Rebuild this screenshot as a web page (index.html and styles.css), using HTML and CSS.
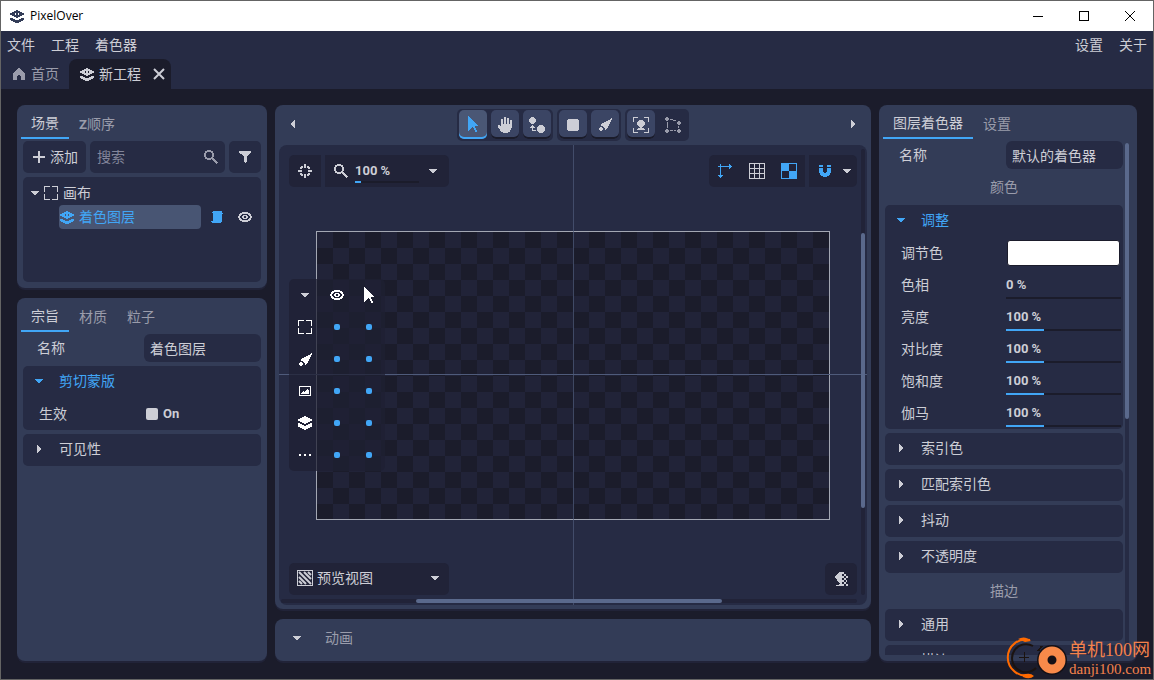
FILE: index.html
```html
<!DOCTYPE html>
<html lang="zh-CN">
<head>
<meta charset="utf-8">
<title>PixelOver</title>
<link rel="stylesheet" href="styles.css">
</head>
<body>
<svg class="defs" aria-hidden="true">
  <symbol id="layer" viewBox="0 0 14 13"><path fill-rule="evenodd" d="M6 0h2v1h2v1h2v1h2v2h-2v1h-2v1H8v1H6V7H4V6H2V5H0V3h2V2h2V1h2zM5 3v2h1V3zM8 3v2h1V3zM0 8h3v1h2v1h4V9h2V8h3v2h-1v1h-2v1H9v1H5v-1H3v-1H1v-1H0z"/></symbol>
  <symbol id="stack" viewBox="0 0 14 14"><path d="M6 0h2v1h2v1h2v1h2v2h-2v1h-2v1H8v1H6V7H4V6H2V5H0V3h2V2h2V1h2zM0 7h2v1h2v1h2v1h2V9h2V8h2V7h2v4h-2v1h-2v1H8v1H6v-1H4v-1H2v-1H0z"/></symbol>
  <symbol id="home" viewBox="0 0 12 12"><path d="M5 0h2v1h1v1h1v1h1v1h1v1h1v7H8V8H7V7H5v1H4v4H0V5h1V4h1V3h1V2h1V1h1z"/></symbol>
  <symbol id="close" viewBox="0 0 12 12"><path class="soft" d="M1 1l10 10M11 1L1 11" fill="none" stroke="currentColor" stroke-width="2"/></symbol>
  <symbol id="plus" viewBox="0 0 12 12"><path d="M5 0h2v5h5v2H7v5H5V7H0V5h5z"/></symbol>
  <symbol id="search" viewBox="0 0 14 14"><path d="M3 0h4v1h2v2h1v4H9v1h1v1h1v1h1v1h1v1h1v1h-1v1h-1v-1h-1v-1h-1v-1H9v-1H8V9H7v1H3V9H1V7H0V3h1V1h2zM3 2v1H2v4h1v1h4V7h1V3H7V2z" fill-rule="evenodd"/></symbol>
  <symbol id="filter" viewBox="0 0 12 12"><path d="M0 0h12v2h-1v1h-1v1H9v1H8v6H7v1H6v-1H5V5H4V4H3V3H1V2H0z"/></symbol>
  <symbol id="down" viewBox="0 0 8 4"><path d="M0 0h8v1H7v1H6v1H5v1H3V3H2V2H1V1H0z"/></symbol>
  <symbol id="right" viewBox="0 0 4 8"><path d="M0 0h1v1h1v1h1v1h1v2H3v1H2v1H1v1H0z"/></symbol>
  <symbol id="left" viewBox="0 0 4 8"><path d="M4 0H3v1H2v1H1v1H0v2h1v1h1v1h1v1h1z"/></symbol>
  <symbol id="frame" viewBox="0 0 14 14"><path d="M0 0h6v1H1v5H0zM8 0h6v6h-1V1H8zM0 8h1v5h5v1H0zM13 8h1v6H8v-1h5z"/></symbol>
  <symbol id="script" viewBox="0 0 12 12"><path d="M2 0h9v2h1v1h-1v8h-1v1H1v-1H0v-1h2V2H1V1h1z"/></symbol>
  <symbol id="eye" viewBox="0 0 14 10"><path fill-rule="evenodd" d="M4 0h6v1h2v1h1v2h1v2h-1v2h-1v1h-2v1H4V9H2V8H1V6H0V4h1V2h1V1h2zM4 2v1H3v1H2v2h1v1h1v1h6V7h1V6h1V4h-1V3h-1V2zM5 3h4v1h1v2H9v1H5V6H4V4h1zM6 4v2h2V4z"/></symbol>
  <symbol id="pointer" viewBox="0 0 11 17"><path d="M0 0h1v1h1v1h1v1h1v1h1v1h1v1h1v1h1v1h1v1h1v1H7v2h1v2h1v2H7v-2H6v-2H5v-1H4v1H3v1H2v1H1v1H0z"/></symbol>
  <symbol id="hand" viewBox="0 0 14 16"><path d="M6 0h2v7h1V1h2v6h1V3h2v8h-1v2h-1v2h-2v1H5v-1H3v-1H2v-2H1v-1H0V8h2v1h1V2h2v5h1z"/></symbol>
  <symbol id="bones" viewBox="0 0 16 16"><path d="M2 0h3v1h1v1h1v3H6v1H5v1H2V6H1V5H0V2h1V1h1zM10 8h4v1h1v1h1v4h-1v1h-1v1h-4v-1H9v-1H8v-4h1V9h1zM3 8h1v1h1v1h1v1H4v2h3v1H3v-3H1v-1h1V9h1z"/></symbol>
  <symbol id="square" viewBox="0 0 12 12"><path d="M1 0h10v1h1v10h-1v1H1v-1H0V1h1z"/></symbol>
  <symbol id="brush" viewBox="0 0 13 13"><path d="M12 0h1v2h-1v2h-1v2h-1v2H9v2H8v1H7v1H6v-2H5V9H4V8H2V6h1V5h2V4h2V3h2V2h2V1h1zM1 9h2v1h1v2H3v1H1v-1H0v-2h1z"/></symbol>
  <symbol id="focus" viewBox="0 0 16 16"><path d="M0 0h5v1H1v4H0zM11 0h5v5h-1V1h-4zM0 11h1v4h4v1H0zM15 11h1v5h-5v-1h4zM6 3h4v1h1v1h1v3h-1v1h-1v1H9v1h2v1h1v1H4v-1h1v-1h2v-1H6V9H5V8H4V5h1V4h1z"/></symbol>
  <symbol id="mesh" viewBox="0 0 16 16"><path d="M1 0h2v1h1v2H3v1H1V3H0V1h1zM13 4h2v1h1v2h-1v1h-2V7h-1V5h1zM1 12h2v1h1v2H3v1H1v-1H0v-2h1zM13 12h2v1h1v2h-1v1h-2v-1h-1v-2h1zM2 5h1v6H2zM5 2h3v1H5zM8 3h3v1H8zM13 9h1v2h-1zM5 13h3v1H5zM9 13h2v1H9z"/></symbol>
  <symbol id="target" viewBox="0 0 14 14"><path d="M6 0h2v4H6zM6 10h2v4H6zM0 6h4v2H0zM10 6h4v2h-4zM3 2h2v2H4v1H2V3h1zM9 2h2v1h1v2h-2V4H9zM2 9h2v1h1v2H3v-1H2zM10 9h2v2h-1v1H9v-2h1z"/></symbol>
  <symbol id="axis" viewBox="0 0 14 14"><path d="M2 0h1v2h8V0h1v1h1v1h1v1h-1v1h-1v1h-1V3H3v8h2v1H4v1H3v1H2v-1H1v-1H0v-1h2V3H0V2h2z"/></symbol>
  <symbol id="grid" viewBox="0 0 16 16"><path fill-rule="evenodd" d="M0 0h16v16H0zM1 1v4h4V1zM6 1v4h4V1zM11 1v4h4V1zM1 6v4h4V6zM6 6v4h4V6zM11 6v4h4V6zM1 11v4h4v-4zM6 11v4h4v-4zM11 11v4h4v-4z"/></symbol>
  <symbol id="checker" viewBox="0 0 16 16"><path fill-rule="evenodd" d="M0 0h16v16H0zM8 1v7H1v7h7V8h7V1z"/></symbol>
  <symbol id="magnet" viewBox="0 0 12 12"><path d="M0 0h4v2H0zM8 0h4v2H8zM0 3h4v4h1v1h2V7h1V3h4v5h-1v2h-1v1H8v1H4v-1H2v-1H1V8H0z"/></symbol>
  <symbol id="image" viewBox="0 0 12 10"><path fill-rule="evenodd" d="M0 0h12v10H0zM1 1v8h10V1zM2 8V7h1V6h1V5h1v1h1V5h1V4h1V3h1v1h1v4z"/></symbol>
  <symbol id="dots" viewBox="0 0 12 2"><path d="M0 0h2v2H0zM5 0h2v2H5zM10 0h2v2h-2z"/></symbol>
  <symbol id="hatch" viewBox="0 0 16 16"><path fill="none" stroke="currentColor" d="M.5.5h15v15H.5z"/><path class="soft" fill="none" stroke="currentColor" stroke-width="2" d="M2 2l12 12M7 2l7 7M11 2l3 3M2 7l7 7M2 11l3 3"/></symbol>
  <symbol id="dither" viewBox="0 0 13 14"><path d="M4 0h5v2H7v2h2v2H7v2h2v2H7v2h2v2H1v-1h3v-1h1v-1H4v-1H3V9H2V7H1V6H0V4h1V3h1V2h1V1h1zM9 2h2v2H9zM11 4h2v2h-2zM9 6h2v2H9zM11 8h1v2h-1zM9 10h2v2H9zM11 12h2v2h-2z"/></symbol>
</svg>

<div class="window">
  <header class="titlebar">
    <svg class="logo" width="14" height="13"><use href="#layer"/></svg>
    <h1 class="title">PixelOver</h1>
    <button class="win-btn" aria-label="最小化"><svg width="10" height="10"><path d="M0 5h10v1H0z"/></svg></button>
    <button class="win-btn" aria-label="最大化"><svg width="10" height="10"><path fill="none" stroke="currentColor" d="M.5.5h9v9h-9z"/></svg></button>
    <button class="win-btn" aria-label="关闭"><svg width="10" height="10"><path class="soft" fill="none" stroke="currentColor" d="M0 0l10 10M10 0L0 10"/></svg></button>
  </header>

  <nav class="menubar">
    <button>文件</button><button>工程</button><button>着色器</button>
    <span class="spacer"></span>
    <button>设置</button><button>关于</button>
  </nav>

  <div class="doc-tabs">
    <button class="doc-tab"><svg width="12" height="12"><use href="#home"/></svg>首页</button>
    <div class="doc-tab current"><svg width="14" height="13"><use href="#layer"/></svg><span>新工程</span>
      <button class="tab-close" aria-label="关闭标签"><svg width="12" height="12"><use href="#close"/></svg></button></div>
  </div>

  <main class="workspace">
    <aside class="column">
      <section class="panel">
        <div class="tabs"><button class="tab active">场景</button><button class="tab"><span class="latin">Z</span>顺序</button></div>
        <div class="panel-body">
          <div class="tools">
            <button class="add"><svg width="12" height="12"><use href="#plus"/></svg>添加</button>
            <label class="search"><input type="text" placeholder="搜索" aria-label="搜索"><svg width="14" height="14"><use href="#search"/></svg></label>
            <button class="filter" aria-label="筛选"><svg width="12" height="12"><use href="#filter"/></svg></button>
          </div>
          <div class="tree">
            <div class="tree-row"><svg width="8" height="4"><use href="#down"/></svg><svg width="14" height="14"><use href="#frame"/></svg><span>画布</span></div>
            <div class="tree-row child">
              <button class="tree-item"><svg width="14" height="13"><use href="#layer"/></svg>着色图层</button>
              <button class="tree-act wide accent" aria-label="着色器"><svg width="12" height="12"><use href="#script"/></svg></button>
              <button class="tree-act" aria-label="显示"><svg width="14" height="10"><use href="#eye"/></svg></button>
            </div>
          </div>
        </div>
      </section>

      <section class="panel grow">
        <div class="tabs"><button class="tab active">宗旨</button><button class="tab">材质</button><button class="tab">粒子</button></div>
        <div class="panel-body">
          <div class="name-row"><label for="lname">名称</label><input id="lname" type="text" value="着色图层"></div>
          <div class="group">
            <button class="group-head open"><svg width="8" height="4"><use href="#down"/></svg>剪切蒙版</button>
            <div class="prop"><label for="clip">生效</label><label class="check"><input id="clip" type="checkbox"><span class="latin">On</span></label></div>
          </div>
          <div class="group"><button class="group-head"><svg width="8" height="8"><use href="#right"/></svg>可见性</button></div>
        </div>
      </section>
    </aside>

    <div class="column center">
      <section class="panel grow stage">
        <div class="toolbar">
          <button class="edge" aria-label="收起左侧"><svg width="4" height="8"><use href="#left"/></svg></button>
          <div class="tool-groups">
            <div class="tool-group">
              <button class="tool selected" aria-label="选择"><svg width="11" height="17"><use href="#pointer"/></svg></button>
              <button class="tool" aria-label="平移"><svg width="14" height="16"><use href="#hand"/></svg></button>
              <button class="tool" aria-label="骨骼"><svg width="16" height="16"><use href="#bones"/></svg></button>
            </div>
            <div class="tool-group">
              <button class="tool" aria-label="形状"><svg width="12" height="12"><use href="#square"/></svg></button>
              <button class="tool" aria-label="画笔"><svg width="13" height="13"><use href="#brush"/></svg></button>
            </div>
            <div class="tool-group">
              <button class="tool" aria-label="聚焦"><svg width="16" height="16"><use href="#focus"/></svg></button>
              <button class="tool flat" aria-label="网格变形"><svg width="16" height="16"><use href="#mesh"/></svg></button>
            </div>
          </div>
          <button class="edge" aria-label="收起右侧"><svg width="4" height="8"><use href="#right"/></svg></button>
        </div>

        <div class="viewport">
          <div class="canvas"></div>
          <div class="axis-x"></div><div class="axis-y"></div>

          <div class="overlay top-left">
            <div class="hud first"><button aria-label="居中"><svg width="14" height="14"><use href="#target"/></svg></button></div>
            <div class="hud last zoom">
              <svg width="14" height="14"><use href="#search"/></svg>
              <div class="spin"><input type="text" class="latin" value="100 %" aria-label="缩放"><input type="range" value="9" style="--fill:9%" aria-label="缩放滑块"></div>
              <button aria-label="缩放选项"><svg width="8" height="4"><use href="#down"/></svg></button>
            </div>
          </div>
          <div class="overlay top-right">
            <div class="hud first">
              <button class="accent" aria-label="坐标轴"><svg width="14" height="14"><use href="#axis"/></svg></button>
              <button aria-label="网格"><svg width="16" height="16"><use href="#grid"/></svg></button>
              <button class="accent" aria-label="棋盘"><svg width="16" height="16"><use href="#checker"/></svg></button>
            </div>
            <div class="hud last snap">
              <button class="accent" aria-label="吸附"><svg width="12" height="12"><use href="#magnet"/></svg></button>
              <button class="narrow" aria-label="吸附选项"><svg width="8" height="4"><use href="#down"/></svg></button>
            </div>
          </div>

          <div class="overlay filters">
            <button aria-label="折叠"><svg class="dim" width="8" height="4"><use href="#down"/></svg></button><button aria-label="可见"><svg width="14" height="10"><use href="#eye"/></svg></button><button aria-label="可选"><svg width="11" height="17"><use href="#pointer"/></svg></button>
            <span><svg width="14" height="14"><use href="#frame"/></svg></span><button class="dot" aria-label="画布可见"></button><button class="dot" aria-label="画布可选"></button>
            <span><svg width="13" height="13"><use href="#brush"/></svg></span><button class="dot" aria-label="画笔可见"></button><button class="dot" aria-label="画笔可选"></button>
            <span><svg width="12" height="10"><use href="#image"/></svg></span><button class="dot" aria-label="图像可见"></button><button class="dot" aria-label="图像可选"></button>
            <span><svg width="14" height="14"><use href="#stack"/></svg></span><button class="dot" aria-label="图层可见"></button><button class="dot" aria-label="图层可选"></button>
            <span><svg width="12" height="2"><use href="#dots"/></svg></span><button class="dot" aria-label="其他可见"></button><button class="dot" aria-label="其他可选"></button>
          </div>

          <label class="overlay preview">
            <svg width="16" height="16"><use href="#hatch"/></svg>
            <select aria-label="预览"><option>预览视图</option></select>
            <svg width="8" height="4"><use href="#down"/></svg>
          </label>
          <div class="overlay bottom-right"><button aria-label="抖动预览"><svg width="13" height="14"><use href="#dither"/></svg></button></div>
          <div class="overlay vbar"><div class="vthumb"></div></div>
          <div class="overlay hbar"><div class="hthumb"></div></div>
        </div>
      </section>

      <section class="panel"><button class="anim"><svg width="8" height="4"><use href="#down"/></svg>动画</button></section>
    </div>

    <aside class="column right">
      <section class="panel grow">
        <div class="tabs"><button class="tab active">图层着色器</button><button class="tab">设置</button></div>
        <div class="scroll">
          <div class="scroll-body">
            <div class="name-row"><label for="sname">名称</label><input id="sname" type="text" value="默认的着色器"></div>
            <h2 class="caption">颜色</h2>
            <div class="group">
              <button class="group-head open"><svg width="8" height="4"><use href="#down"/></svg>调整</button>
              <div class="prop"><label for="tint">调节色</label><button id="tint" class="swatch"></button></div>
              <div class="prop"><label for="p1">色相</label><div class="spin"><input id="p1" type="text" class="latin" value="0 %"><input type="range" value="0" style="--fill:0%" aria-label="色相滑块"></div></div>
              <div class="prop"><label for="p2">亮度</label><div class="spin"><input id="p2" type="text" class="latin" value="100 %"><input type="range" value="33" style="--fill:33%" aria-label="亮度滑块"></div></div>
              <div class="prop"><label for="p3">对比度</label><div class="spin"><input id="p3" type="text" class="latin" value="100 %"><input type="range" value="33" style="--fill:33%" aria-label="对比度滑块"></div></div>
              <div class="prop"><label for="p4">饱和度</label><div class="spin"><input id="p4" type="text" class="latin" value="100 %"><input type="range" value="33" style="--fill:33%" aria-label="饱和度滑块"></div></div>
              <div class="prop"><label for="p5">伽马</label><div class="spin"><input id="p5" type="text" class="latin" value="100 %"><input type="range" value="33" style="--fill:33%" aria-label="伽马滑块"></div></div>
            </div>
            <div class="group"><button class="group-head"><svg width="8" height="8"><use href="#right"/></svg>索引色</button></div>
            <div class="group"><button class="group-head"><svg width="8" height="8"><use href="#right"/></svg>匹配索引色</button></div>
            <div class="group"><button class="group-head"><svg width="8" height="8"><use href="#right"/></svg>抖动</button></div>
            <div class="group"><button class="group-head"><svg width="8" height="8"><use href="#right"/></svg>不透明度</button></div>
            <h2 class="caption">描边</h2>
            <div class="group"><button class="group-head"><svg width="8" height="8"><use href="#right"/></svg>通用</button></div>
            <div class="group"><button class="group-head"><svg width="8" height="8"><use href="#right"/></svg>描边</button></div>
          </div>
          <div class="scrollbar"><div class="thumb"></div></div>
        </div>
      </section>
    </aside>
  </main>

  <div class="watermark">
    <svg width="64" height="42" viewBox="0 0 64 42">
      <path d="M25 3A18 18 0 1 0 25 38" fill="none" stroke="#ff6a00" stroke-width="2" class="soft"/>
      <path d="M13 2q7-4 13 2l-6 1zM17 38q8-3 12 1-4 4-11 1z" fill="#ff6a00" class="soft"/>
      <path d="M28 9A14 14 0 1 0 31 31" fill="none" stroke="#1b1310" stroke-width="2" class="soft"/>
      <path d="M19 15v10M14 20h10" stroke="#1b1310" stroke-width="1"/>
      <path d="M33 14l4-5" stroke="#1b1310" stroke-width="2"/>
      <circle cx="47" cy="23" r="15" fill="#141016" class="soft"/>
      <circle cx="47" cy="23" r="9" fill="none" stroke="#f88a4a" stroke-width="9" class="soft"/>
    </svg>
    <div class="mark-text"><span class="mark-name">单机100网</span><span class="mark-url">danji100.com</span></div>
  </div>
</div>
</body>
</html>
```
FILE: styles.css
```css
:root {
  --bg: #1b1c2b;
  --bar: #262b44;
  --panel: #333c57;
  --hud: #212338;
  --text: #cdced6;
  --muted: #9a9cab;
  --accent: #41a6f6;
}

* { box-sizing: border-box; }

body {
  margin: 0;
  background: var(--bg);
  color: var(--text);
  font: 14px/20px Roboto, "Noto Sans CJK SC", sans-serif;
}

button, input, select {
  margin: 0;
  padding: 0;
  border: 0;
  background: none;
  color: inherit;
  font: inherit;
}

input, select { min-width: 0; width: 100%; outline: none; appearance: none; }

svg { display: block; flex: none; fill: currentColor; shape-rendering: crispEdges; }
.soft { shape-rendering: auto; }
.defs { position: absolute; width: 0; height: 0; }
.accent { color: var(--accent); }
.latin, input.latin { font-size: 13px; font-weight: 700; }

.window {
  position: relative;
  display: flex;
  flex-direction: column;
  height: 100vh;
  border: 1px solid #646464;
  overflow: hidden;
}

/* title bar and menus */
.titlebar {
  display: flex;
  align-items: center;
  flex: 0 0 30px;
  padding-left: 9px;
  background: #fff;
  color: #000;
}
.logo { color: #333c57; }
.title { flex: 1; margin: 0 0 0 6px; font: 12px/20px "Open Sans", sans-serif; }
.win-btn { display: grid; place-items: center; width: 46px; height: 30px; }

.menubar {
  display: flex;
  flex: 0 0 28px;
  gap: 16px;
  padding: 0 6px;
  background: var(--bar);
}
.spacer { flex: 1; }

.doc-tabs { display: flex; flex: 0 0 30px; background: var(--bar); }
.doc-tab {
  display: flex;
  align-items: center;
  gap: 6px;
  padding: 0 10px 0 12px;
  color: var(--muted);
}
.doc-tab.current {
  gap: 5px;
  padding: 0 6px 0 11px;
  border-radius: 8px 8px 0 0;
  background: var(--bg);
  color: var(--text);
}
.tab-close { padding-left: 7px; }

/* columns */
.workspace {
  display: grid;
  grid-template-columns: 250px minmax(0, 1fr) 258px;
  gap: 8px;
  flex: 1;
  min-height: 0;
  padding: 16px 16px 18px;
}
.column { display: flex; flex-direction: column; gap: 10px; min-height: 0; min-width: 0; }
.panel {
  display: flex;
  flex-direction: column;
  border-radius: 8px;
  background: var(--panel);
  box-shadow: 0 2px 0 var(--hud);
}
.grow { flex: 1; min-height: 0; }
.panel-body { display: flex; flex-direction: column; gap: 4px; padding: 2px 6px 6px; }

.tabs { display: flex; flex: none; height: 34px; padding: 4px 4px 0; }
.tab { padding: 2px 10px 0; border-bottom: 2px solid transparent; color: var(--muted); }
.tab.active { padding-top: 0; border-color: var(--accent); color: var(--text); }

/* scene tree */
.tools { display: flex; gap: 4px; height: 32px; }
.add, .search, .filter { border-radius: 5px; background: var(--bar); }
.add { display: flex; align-items: center; gap: 5px; padding: 0 8px 0 10px; }
.search { display: flex; flex: 1; align-items: center; min-width: 0; padding: 0 7px; color: var(--muted); }
.search input::placeholder { color: #82859a; opacity: 1; }
.filter { display: grid; place-items: center; width: 32px; }
.tree { min-height: 105px; padding: 4px 4px 4px 2px; border-radius: 5px; background: var(--bar); }
.tree-row { display: flex; align-items: center; gap: 5px; height: 24px; padding-left: 6px; }
.tree-row.child { gap: 0; padding-left: 34px; }
.tree-item {
  display: flex;
  flex: 1;
  align-items: center;
  gap: 5px;
  height: 24px;
  padding-left: 1px;
  border-radius: 4px;
  background: #485573;
  color: var(--accent);
}
.tree-act { display: grid; place-items: center; width: 24px; height: 24px; }
.tree-act.wide { width: 32px; }

/* property rows */
.name-row, .prop { display: grid; grid-template-columns: 1fr 1fr; gap: 4px; align-items: center; }
.name-row { height: 28px; flex: none; }
.name-row label { padding-left: 14px; }
.name-row input { height: 28px; padding: 0 6px; border-radius: 6px; background: var(--bar); }
.group { flex: none; border-radius: 5px; background: var(--bar); }
.group-head { display: flex; align-items: center; gap: 16px; width: 100%; height: 32px; padding: 0 0 2px 12px; }
.group-head.open { color: var(--accent); }
.prop { height: 32px; }
.prop > label:first-child { padding-left: 16px; }
.check { display: flex; align-items: center; gap: 5px; padding-left: 2px; }
.check input { width: 12px; height: 12px; border-radius: 2px; background: var(--text); }
.caption { flex: none; margin: 0; color: var(--muted); font: inherit; line-height: 28px; text-align: center; }
.swatch { height: 26px; margin: 0 3px 0 1px; border: 1px solid var(--bg); border-radius: 3px; background: #fff; }

.spin { display: flex; flex-direction: column; justify-content: flex-end; height: 32px; padding: 0 2px 2px 0; }
.spin input[type="text"] { height: 22px; }
.spin input[type="range"] {
  flex: none;
  height: 2px;
  margin-top: 2px;
  background: linear-gradient(to right, var(--accent) var(--fill), var(--bg) var(--fill));
}
.spin input::-webkit-slider-thumb { appearance: none; width: 0; height: 0; }

.scroll { display: flex; gap: 2px; flex: 1; min-height: 0; padding: 2px 8px 6px 6px; }
.scroll-body { display: flex; flex: 1; flex-direction: column; gap: 4px; min-width: 0; overflow: hidden; }
.scrollbar { flex: 0 0 4px; margin-top: 2px; border-radius: 2px; background: var(--bar); }
.thumb { height: 54%; border-radius: 2px; background: #5a698c; }

/* stage */
.stage { padding: 4px; }
.toolbar { display: flex; justify-content: space-between; height: 36px; }
.edge { display: grid; place-items: center; width: 28px; height: 30px; }
.tool-groups { display: flex; gap: 4px; }
.tool-group { display: flex; gap: 4px; height: 32px; padding: 1px 2px 2px; border-radius: 5px; background: var(--bar); }
.tool { display: grid; place-items: center; width: 28px; border-radius: 5px; background: #3b4564; box-shadow: inset 0 -2px 0 var(--bg); }
.tool.selected { background: #4a5775; box-shadow: inset 0 -2px 0 var(--accent); color: var(--accent); }
.tool.flat { background: none; box-shadow: none; color: var(--muted); }

.viewport {
  position: relative;
  display: grid;
  flex: 1;
  place-items: center;
  border-radius: 8px;
  background: var(--bar);
  overflow: hidden;
}
.canvas {
  width: 514px;
  height: 289px;
  margin-top: 1px;
  border: 1px solid #a3a7b3;
  background: repeating-conic-gradient(var(--bg) 0 25%, var(--hud) 0 50%) 0 0 / 32px 32px;
}
.axis-x, .axis-y { position: absolute; background: #4f5b7b; }
.axis-x { top: calc(50% - 1px); left: 0; right: 0; height: 1px; }
.axis-y { left: 50%; top: 0; bottom: 0; width: 1px; opacity: .7; }

.overlay { position: absolute; }
.top-left { top: 10px; left: 10px; display: flex; gap: 4px; }
.top-right { top: 10px; right: 10px; display: flex; gap: 4px; }
.hud { display: flex; align-items: center; height: 32px; background: var(--hud); }
.hud.first { border-radius: 5px 0 0 5px; }
.hud.last { border-radius: 0 5px 5px 0; }
.hud button, .bottom-right button { display: grid; place-items: center; width: 32px; height: 32px; }
.zoom { width: 124px; padding-left: 9px; gap: 7px; }
.zoom .spin { width: 64px; padding: 0 0 4px; }
.zoom .spin input[type="text"] { height: 22px; }
.zoom .spin input[type="range"] { margin: 0; }
.zoom button { width: 12px; margin-left: 1px; }
.hud.snap .narrow { width: 16px; padding-right: 4px; }

.filters {
  top: calc(50% - 96px);
  left: 10px;
  display: grid;
  grid-template-columns: repeat(3, 32px);
  grid-auto-rows: 32px;
  border-radius: 5px;
  background: rgba(31, 32, 51, .75);
  color: #fff;
}
.filters > * { display: grid; place-items: center; }
.dim { color: var(--text); }
.dot::before { content: ""; width: 6px; height: 6px; border-radius: 2px; background: var(--accent); }

.preview {
  bottom: 10px;
  left: 10px;
  display: flex;
  align-items: center;
  gap: 4px;
  width: 160px;
  height: 32px;
  padding: 0 10px 2px 8px;
  border-radius: 5px;
  background: var(--hud);
}
.bottom-right { right: 10px; bottom: 10px; border-radius: 5px; background: var(--hud); }
.vbar, .hbar { border-radius: 2px; background: var(--hud); }
.vbar { top: 4px; right: 2px; bottom: 10px; width: 4px; padding-top: 84px; }
.vthumb { height: 76%; border-radius: 2px; background: #5a698c; }
.hbar { left: 2px; right: 10px; bottom: 2px; height: 4px; }
.hthumb { width: 53%; height: 4px; margin: 0 auto; border-radius: 2px; background: #5a698c; }

.anim { display: flex; align-items: center; gap: 24px; height: 42px; padding: 0 18px 4px; color: var(--muted); }
.anim svg { color: var(--text); }

/* site mark */
.watermark { position: absolute; right: 2px; bottom: 0; display: flex; color: #f4824b; }
.mark-text { display: flex; flex-direction: column; width: 82px; padding-top: 2px; white-space: nowrap; }
.mark-name { font: 18px/22px "Liberation Serif", "Noto Sans CJK SC", serif; }
.mark-url { font: 15px/16px "Liberation Serif", serif; }
```
